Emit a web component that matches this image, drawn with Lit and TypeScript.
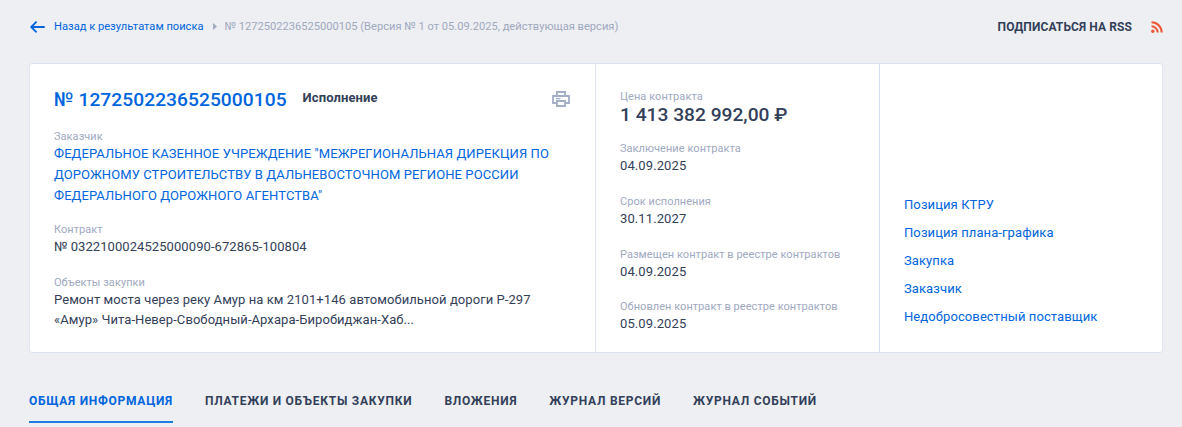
import { LitElement, html, css } from "lit";
import { customElement } from "lit/decorators.js";

@customElement("app-root")
export class AppRoot extends LitElement {
  static styles = css`
    :host { display: block; height: 427px; overflow: hidden; background: #eeeff2; font-family: Roboto, sans-serif; color: #334059; }
    a { color: #0065dd; text-decoration: none; }
    .top { display: flex; align-items: center; height: 54px; padding: 0 19px 0 29px; }
    .back { display: flex; width: 25px; }
    .crumb { font-size: 11.13px; line-height: 16px; }
    .caret { margin: 0 8px 1px 9px; display: flex; }
    .muted { color: #a0a9bf; }
    .rss { margin-left: auto; display: flex; align-items: center; gap: 19px; font-size: 12px; font-weight: 700; letter-spacing: 0.1px; color: #334059; }
    .card { margin: 9px 19px 0 29px; height: 290px; box-sizing: border-box; background: #fff; border: 1px solid #dde4f0; border-radius: 3px; display: grid; grid-template-columns: 566px 284px 1fr; }
    .col { box-sizing: border-box; }
    .left { padding: 24px 24px 0 24px; border-right: 1px solid #dde4f0; }
    .mid { padding: 26px 16px 0 24px; border-right: 1px solid #d5dff0; }
    .right { padding: 0 24px 26px 24px; display: flex; flex-direction: column; justify-content: flex-end; gap: 9px; font-size: 13px; line-height: 19px; letter-spacing: 0.1px; }
    .head { display: flex; align-items: flex-start; }
    .num { font-size: 19.2px; line-height: 24px; font-weight: 500; color: #0065dd; letter-spacing: 0.05px; }
    .status { margin-left: 16px; font-size: 13px; line-height: 20px; font-weight: 700; letter-spacing: 0.1px; }
    .print { margin-left: auto; margin-right: 1px; margin-top: 3px; display: flex; }
    .label { font-size: 11px; line-height: 13px; color: #a0a9bf; letter-spacing: 0.05px; }
    .val { font-size: 13px; line-height: 21px; color: #334059; letter-spacing: 0.1px; }
    .left .val { letter-spacing: 0.07px; }
    .objects .val { line-height: 20px; padding-top: 1px; }
    .customer { margin-top: 18px; }
    .customer a { display: block; font-size: 13px; line-height: 21px; letter-spacing: 0.09px; }
    .contract { margin-top: 17px; }
    .objects { margin-top: 19px; }
    .price { font-size: 19.2px; line-height: 24px; font-weight: 500; }
    .mid .block { margin-top: 18.75px; }
    .mid .first { margin-top: 15px; }
    .tabs { display: flex; gap: 32px; margin: 27px 0 0 29px; font-size: 12px; font-weight: 700; letter-spacing: 0.73px; color: #334059; }
    .tab { height: 43px; box-sizing: border-box; padding-top: 14px; line-height: 14px; }
    .tab.on { color: #0065dd; border-bottom: 2px solid #1a7fe0; }
  `;

  render() {
    return html`
      <div class="top">
        <span class="back">
          <svg width="16" height="14" viewBox="0 0 16 14" fill="none" stroke="#0065dd" stroke-width="1.8"><path d="M15.7 7H2.6M7.6 1.6 2.2 7l5.4 5.4"/></svg>
        </span>
        <a class="crumb" href="#">Назад к результатам поиска</a>
        <span class="caret"><svg width="4" height="7" viewBox="0 0 4 7"><path d="M0 0l4 3.5L0 7z" fill="#a0a9bf"/></svg></span>
        <span class="crumb muted">№ 1272502236525000105 (Версия № 1 от 05.09.2025, действующая версия)</span>
        <span class="rss">ПОДПИСАТЬСЯ НА RSS
          <svg width="12" height="12" viewBox="0 0 12 12" fill="none" stroke="#f0583a" stroke-width="2.1"><path d="M0.5 1.3c5.6 0 10.2 4.6 10.2 10.2M0.5 5.3c3.4 0 6.2 2.8 6.2 6.2"/><circle cx="1.8" cy="10.2" r="1.7" fill="#f0583a" stroke="none"/></svg>
        </span>
      </div>
      <div class="card">
        <div class="col left">
          <div class="head">
            <span class="num">№ 1272502236525000105</span>
            <span class="status">Исполнение</span>
            <span class="print">
              <svg width="18" height="16" viewBox="0 0 18 16" fill="none" stroke="#a3adc6" stroke-width="1.8"><path d="M4.9 5V1h8.2v4M4.9 12H1V5h16v7h-3.9"/><path d="M4.9 10h8.2v5H4.9z"/><path d="M4 7.6h4.5" stroke-width="1.4"/></svg>
            </span>
          </div>
          <div class="customer">
            <div class="label">Заказчик</div>
            <a href="#">ФЕДЕРАЛЬНОЕ КАЗЕННОЕ УЧРЕЖДЕНИЕ "МЕЖРЕГИОНАЛЬНАЯ ДИРЕКЦИЯ ПО ДОРОЖНОМУ СТРОИТЕЛЬСТВУ В ДАЛЬНЕВОСТОЧНОМ РЕГИОНЕ РОССИИ ФЕДЕРАЛЬНОГО ДОРОЖНОГО АГЕНТСТВА"</a>
          </div>
          <div class="contract">
            <div class="label">Контракт</div>
            <div class="val">№ 0322100024525000090-672865-100804</div>
          </div>
          <div class="objects">
            <div class="label">Объекты закупки</div>
            <div class="val">Ремонт моста через реку Амур на км 2101+146 автомобильной дороги Р-297<br />«Амур» Чита-Невер-Свободный-Архара-Биробиджан-Хаб...</div>
          </div>
        </div>
        <div class="col mid">
          <div class="label">Цена контракта</div>
          <div class="price">1 413 382 992,00 ₽</div>
          <div class="block first"><div class="label">Заключение контракта</div><div class="val">04.09.2025</div></div>
          <div class="block"><div class="label">Срок исполнения</div><div class="val">30.11.2027</div></div>
          <div class="block"><div class="label">Размещен контракт в реестре контрактов</div><div class="val">04.09.2025</div></div>
          <div class="block"><div class="label">Обновлен контракт в реестре контрактов</div><div class="val">05.09.2025</div></div>
        </div>
        <div class="col right">
          <a href="#">Позиция КТРУ</a>
          <a href="#">Позиция плана-графика</a>
          <a href="#">Закупка</a>
          <a href="#">Заказчик</a>
          <a href="#">Недобросовестный поставщик</a>
        </div>
      </div>
      <div class="tabs">
        <span class="tab on">ОБЩАЯ ИНФОРМАЦИЯ</span>
        <span class="tab">ПЛАТЕЖИ И ОБЪЕКТЫ ЗАКУПКИ</span>
        <span class="tab">ВЛОЖЕНИЯ</span>
        <span class="tab">ЖУРНАЛ ВЕРСИЙ</span>
        <span class="tab">ЖУРНАЛ СОБЫТИЙ</span>
      </div>
    `;
  }
}
